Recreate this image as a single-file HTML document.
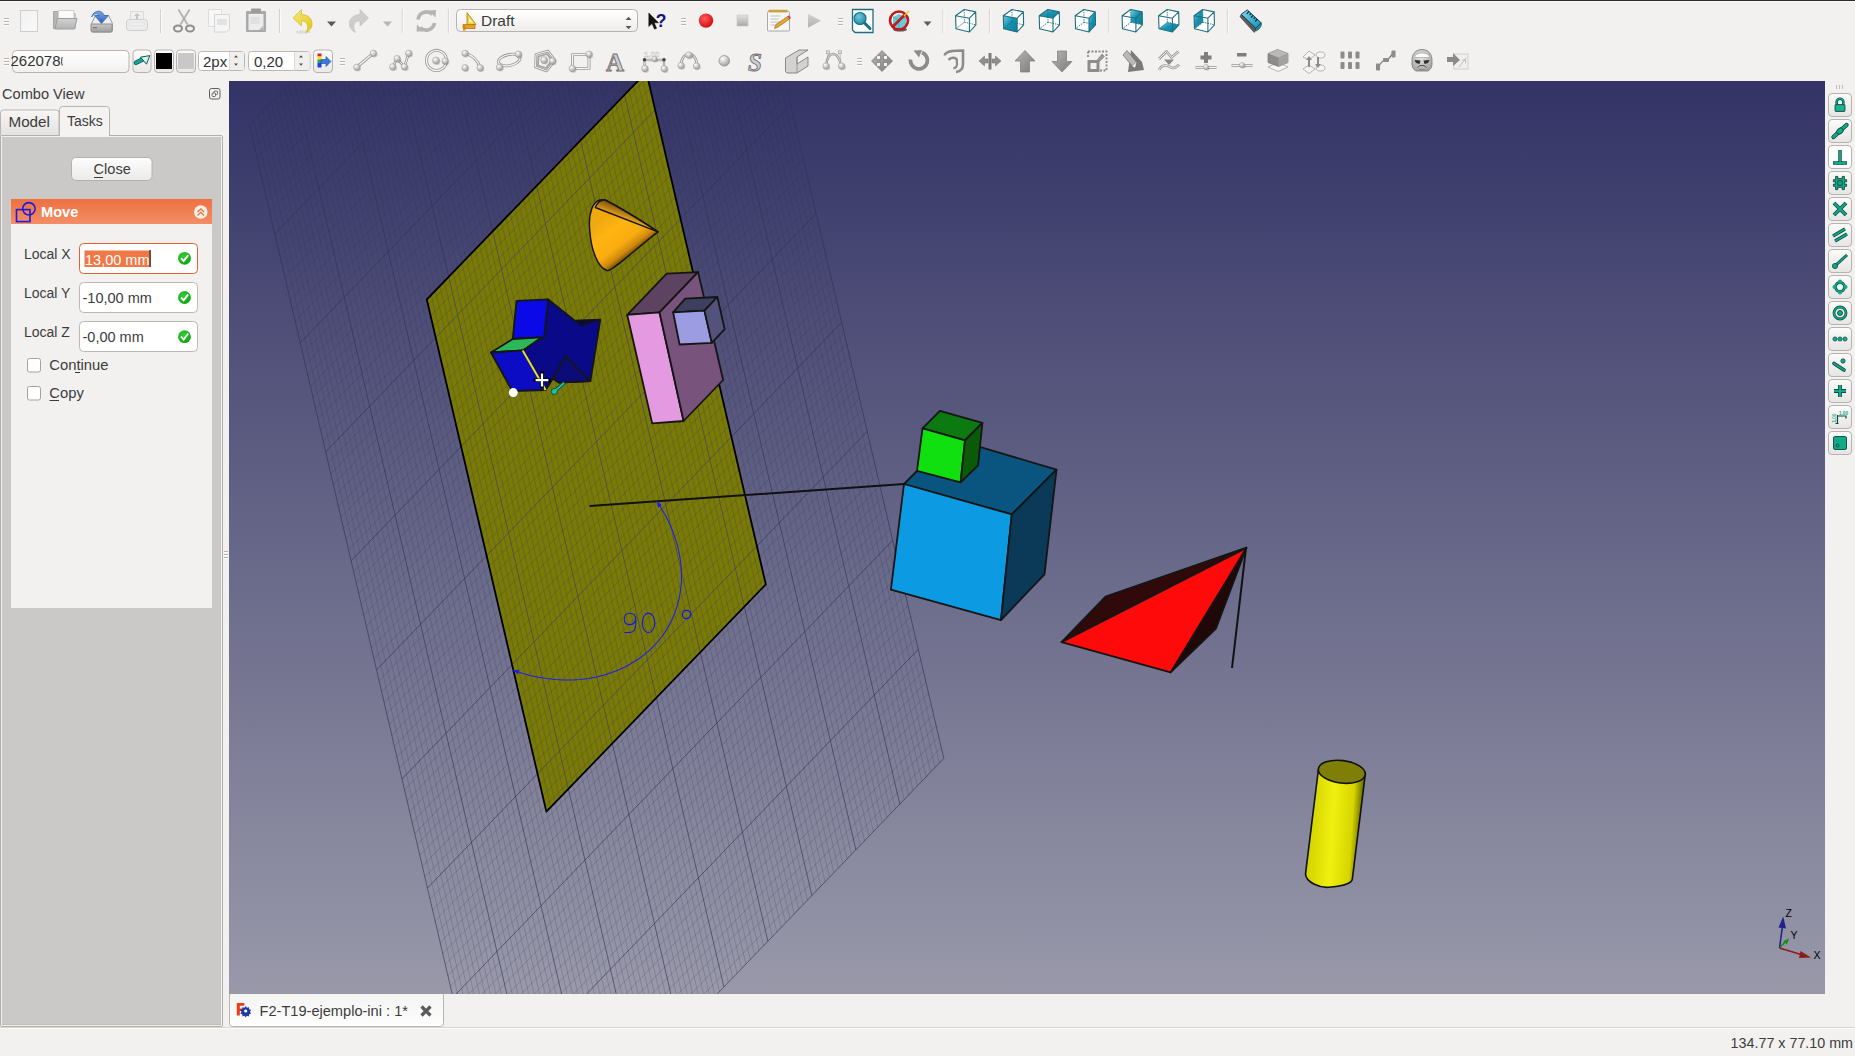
<!DOCTYPE html>
<html><head><meta charset="utf-8">
<style>
*{box-sizing:border-box}
html,body{margin:0;padding:0}
body{width:1855px;height:1056px;position:relative;overflow:hidden;background:#f2f1f0;font-family:"Liberation Sans",sans-serif;font-size:14px;color:#3c3c3c}
.a{position:absolute}
.topline{left:0;top:0;width:1855px;height:1px;background:#2c2b27}
.topline2{left:0;top:1px;width:1855px;height:1px;background:#fbfbfa}
.grip{position:absolute;width:5px;height:8px;background:repeating-linear-gradient(#b3b0ab 0 1px,#fdfdfd 1px 2px,transparent 2px 3px)}
.sep{position:absolute;width:1px;height:24px;background:#d3d0cc;border-right:1px solid #fff;width:2px}
.ico{position:absolute}
.txt{position:absolute;white-space:nowrap}
</style></head><body>
<div class="a topline"></div><div class="a topline2"></div>
<svg class="a" style="left:0;top:0" width="1855" height="80" viewBox="0 0 1855 80" font-family="Liberation Sans"><defs>
<linearGradient id="pageg" x1="0" y1="0" x2="1" y2="1"><stop offset="0" stop-color="#f0f0f0"/><stop offset="1" stop-color="#fafafa"/></linearGradient>
<linearGradient id="foldg" x1="0" y1="0" x2="0" y2="1"><stop offset="0" stop-color="#d2d2d2"/><stop offset="1" stop-color="#b4b4b4"/></linearGradient>
<linearGradient id="driveg" x1="0" y1="0" x2="0" y2="1"><stop offset="0" stop-color="#c8c8c8"/><stop offset="1" stop-color="#9c9c9c"/></linearGradient>
<linearGradient id="blueg" x1="0" y1="0" x2="0" y2="1"><stop offset="0" stop-color="#7aa8e0"/><stop offset="1" stop-color="#2a62b8"/></linearGradient>
<linearGradient id="undog" x1="0" y1="0" x2="1" y2="1"><stop offset="0" stop-color="#f4e880"/><stop offset="1" stop-color="#e0c810"/></linearGradient>
<linearGradient id="combog" x1="0" y1="0" x2="0" y2="1"><stop offset="0" stop-color="#ffffff"/><stop offset="1" stop-color="#eeedeb"/></linearGradient>
<linearGradient id="btng" x1="0" y1="0" x2="0" y2="1"><stop offset="0" stop-color="#fbfbfa"/><stop offset="1" stop-color="#eae9e7"/></linearGradient>
<linearGradient id="inputg" x1="0" y1="0" x2="0" y2="1"><stop offset="0" stop-color="#ffffff"/><stop offset="1" stop-color="#f0f0f0"/></linearGradient>
<radialGradient id="recg" cx="0.4" cy="0.35" r="0.7"><stop offset="0" stop-color="#ff5a5a"/><stop offset="1" stop-color="#d00808"/></radialGradient>
<linearGradient id="stopg" x1="0" y1="0" x2="0" y2="1"><stop offset="0" stop-color="#e2e2e2"/><stop offset="1" stop-color="#a8a8a8"/></linearGradient>
<linearGradient id="playg" x1="0" y1="0" x2="0" y2="1"><stop offset="0" stop-color="#d4d4d4"/><stop offset="1" stop-color="#b0b0b0"/></linearGradient>
<radialGradient id="magg" cx="0.4" cy="0.35" r="0.7"><stop offset="0" stop-color="#70c8e0"/><stop offset="1" stop-color="#1a8aa8"/></radialGradient>
<linearGradient id="cubeg" x1="0" y1="0" x2="1" y2="1"><stop offset="0" stop-color="#7ccbe8"/><stop offset="0.45" stop-color="#1894b0"/><stop offset="1" stop-color="#0a7c98"/></linearGradient>
<radialGradient id="ballg" cx="0.35" cy="0.3" r="0.75"><stop offset="0" stop-color="#ffffff"/><stop offset="0.6" stop-color="#c4c4c4"/><stop offset="1" stop-color="#9a9a9a"/></radialGradient>
<radialGradient id="clg" cx="0.45" cy="0.35" r="0.7"><stop offset="0" stop-color="#e8e8e8"/><stop offset="1" stop-color="#a0a0a0"/></radialGradient>
<linearGradient id="greyg" x1="0" y1="0" x2="1" y2="1"><stop offset="0" stop-color="#b4b4b4"/><stop offset="1" stop-color="#7c7c7c"/></linearGradient>
</defs><rect x="4" y="18" width="5" height="1" fill="#b8b5b0"/><rect x="4" y="19" width="5" height="1" fill="#fff"/><rect x="4" y="21" width="5" height="1" fill="#b8b5b0"/><rect x="4" y="22" width="5" height="1" fill="#fff"/><rect x="4" y="24" width="5" height="1" fill="#b8b5b0"/><rect x="4" y="25" width="5" height="1" fill="#fff"/><rect x="20.5" y="10.5" width="17" height="21" fill="url(#pageg)" stroke="#cecece"/><path d="M53.5 11.5h7l1.5 2h13v15h-21.5z" fill="#b6b6b6" stroke="#a6a6a6"/><rect x="58.5" y="10.5" width="15.5" height="11" fill="#fbfbfb" stroke="#cfcfcf"/><path d="M57.5 18.5h19.5l-2.5 10.5h-19.5z" fill="url(#foldg)" stroke="#9e9e9e"/><path d="M95.5 15.5h13l4 8v7a1.5 1.5 0 0 1-1.5 1.5h-18a1.5 1.5 0 0 1-1.5-1.5v-7z" fill="#eeeeee" stroke="#9c9c9c"/><path d="M91 24h21v6.5a1.5 1.5 0 0 1-1.5 1.5h-18a1.5 1.5 0 0 1-1.5-1.5z" fill="url(#driveg)" stroke="#8e8e8e"/><rect x="93" y="27" width="4" height="1.2" fill="#777"/><path d="M91.5 17 C93.5 10.5 101 8.5 104.5 15.5 L108.5 15.5 L101.5 23.5 L94.5 15.5 L99 15.5 C97 12.5 94 13.5 91.5 17Z" fill="url(#blueg)" stroke="#2a5aa8" stroke-width="0.6"/><rect x="130.5" y="11.5" width="13" height="9" fill="#efefef" stroke="#dadada"/><path d="M137 13l-3 3h2v3h2v-3h2z" fill="#c4c4c4"/><rect x="126.5" y="19.5" width="21" height="11" rx="3" fill="#ececec" stroke="#cdcdcd"/><rect x="129" y="23" width="16" height="2" rx="1" fill="#f8f8f8" stroke="#d6d6d6" stroke-width="0.6"/><rect x="160.0" y="9" width="1" height="24" fill="#d5d2ce"/><rect x="161.0" y="9" width="1" height="24" fill="#fbfbfa"/><path d="M178.5 9.5 L187.5 24.5 M189.5 9.5 L180.5 24.5" stroke="#c2c2c2" stroke-width="2.2"/><path d="M178.5 9.5 L187.5 24.5 M189.5 9.5 L180.5 24.5" stroke="#9a9a9a" stroke-width="0.6"/><ellipse cx="178" cy="28.5" rx="4" ry="3" fill="none" stroke="#8c8c8c" stroke-width="2"/><ellipse cx="190" cy="28.5" rx="4" ry="3" fill="none" stroke="#8c8c8c" stroke-width="2"/><rect x="208.5" y="9.5" width="13" height="17" fill="#f7f7f7" stroke="#dedede"/><path d="M214.5 14.5h15v14.5l-3 3h-12z" fill="#f5f5f5" stroke="#d6d6d6"/><rect x="217" y="19" width="10" height="6" fill="#e2e2e2"/><rect x="246" y="11" width="20" height="21" rx="1" fill="#a9a9a9"/><rect x="248.5" y="14" width="15" height="16" fill="#ececec"/><rect x="251" y="8.5" width="10" height="4.5" rx="1" fill="#9c9c9c"/><rect x="250.5" y="17" width="9" height="7" fill="#e0e0e0"/><path d="M263.5 25.5v4.5h-4.5z" fill="#b8b8b8"/><rect x="279.0" y="9" width="1" height="24" fill="#d5d2ce"/><rect x="280.0" y="9" width="1" height="24" fill="#fbfbfa"/><ellipse cx="303" cy="32" rx="8" ry="1.8" fill="#000" opacity="0.08"/><path d="M293 18 L301.5 9.5 L301.5 14.5 C308.5 14.5 313 19.5 312 25.5 C311.5 28.5 309 31 306 32.5 C308 29 308.5 25 306 22.5 C304.5 21 303 21 301.5 21 L301.5 26 Z" fill="url(#undog)" stroke="#cbb214" stroke-width="0.6"/><path d="M327 21.5h9l-4.5 5z" fill="#5a5a5a"/><path d="M368.5 18 L360 9.5 L360 14.5 C353 14.5 348.5 19.5 349.5 25.5 C350 28.5 352.5 31 355.5 32.5 C353.5 29 353 25 355.5 22.5 C357 21 358.5 21 360 21 L360 26 Z" fill="#cdcdcd" stroke="#bdbdbd" stroke-width="0.6"/><path d="M383 21.5h9l-4.5 5z" fill="#b5b5b5"/><rect x="401.8" y="9" width="1" height="24" fill="#d5d2ce"/><rect x="402.8" y="9" width="1" height="24" fill="#fbfbfa"/><path d="M418 19.5 A8.5 8.5 0 0 1 432.5 14.5" fill="none" stroke="#b4b4b4" stroke-width="3.6"/><path d="M428.5 10.5 L436 10 L435.5 17.5Z" fill="#b4b4b4"/><path d="M434.5 23 A8.5 8.5 0 0 1 420 27.5" fill="none" stroke="#b4b4b4" stroke-width="3.6"/><path d="M423.5 31.5 L416.5 31.5 L417 24.5Z" fill="#b4b4b4"/><rect x="447.9" y="9" width="1" height="24" fill="#d5d2ce"/><rect x="448.9" y="9" width="1" height="24" fill="#fbfbfa"/><rect x="456.5" y="9.5" width="181" height="22" rx="4" fill="url(#combog)" stroke="#b6b3ae"/><path d="M463 28.5v-4h12v4z" fill="#e8a020" stroke="#b06810" stroke-width="0.7"/><path d="M467 24.5v-12l9 12z" fill="#f0d040" stroke="#a08010" stroke-width="0.8"/><path d="M469 22.5v-5l4 5z" fill="#fff6b0"/><rect x="463" y="25" width="2.5" height="5.5" fill="#d88a10"/><text x="481" y="26" font-size="15.5" fill="#3c3c3c">Draft</text><path d="M625.5 20h6l-3-3.2z M625.5 26h6l-3 3.2z" fill="#5a5a5a"/><path d="M648.8 13 L648.8 26.5 L652 23.6 L654.5 29.2 L656.6 28.3 L654.2 22.8 L658.5 22.8 Z" fill="#111" stroke="#111" stroke-width="0.5"/><text x="655.8" y="26.5" font-size="17.5" font-weight="bold" fill="#141478">?</text><rect x="681" y="18" width="5" height="1" fill="#b8b5b0"/><rect x="681" y="19" width="5" height="1" fill="#fff"/><rect x="681" y="21" width="5" height="1" fill="#b8b5b0"/><rect x="681" y="22" width="5" height="1" fill="#fff"/><rect x="681" y="24" width="5" height="1" fill="#b8b5b0"/><rect x="681" y="25" width="5" height="1" fill="#fff"/><circle cx="706" cy="20.6" r="7.2" fill="url(#recg)"/><rect x="737" y="15" width="11" height="11" fill="url(#stopg)" stroke="#c6c6c6" stroke-width="0.6"/><rect x="767.5" y="11.5" width="22" height="19.5" rx="1" fill="#f6f6f4" stroke="#a8a8a8"/><rect x="768.5" y="9.8" width="19" height="2.6" fill="#c8a23c"/><path d="M770.5 16h10M770.5 19h8M770.5 22h12M770.5 25h9" stroke="#b4b4b4" stroke-width="0.8"/><path d="M774.5 28.5 L776 24.5 L787.5 16.5 L789.5 19 L778 27 Z" fill="#e8a82c" stroke="#8a5a10" stroke-width="0.6"/><path d="M787.5 16.5 L789.5 19 L791 18 L789 15.3Z" fill="#d04040"/><path d="M808 13.7 L821 20.7 L808 27.8 Z" fill="url(#playg)"/><rect x="838" y="18" width="5" height="1" fill="#b8b5b0"/><rect x="838" y="19" width="5" height="1" fill="#fff"/><rect x="838" y="21" width="5" height="1" fill="#b8b5b0"/><rect x="838" y="22" width="5" height="1" fill="#fff"/><rect x="838" y="24" width="5" height="1" fill="#b8b5b0"/><rect x="838" y="25" width="5" height="1" fill="#fff"/><path d="M852.5 9.5h20.5v23h-18l-2.5-2.5z" fill="#fff" stroke="#1e6e80" stroke-width="1.3"/><circle cx="860" cy="18.5" r="6" fill="url(#magg)" stroke="#1e6e80" stroke-width="1.2"/><path d="M864.5 23 L870 28.5" stroke="#1e6e80" stroke-width="3" stroke-linecap="round"/><ellipse cx="900" cy="29.5" rx="7" ry="2" fill="#333" opacity="0.8"/><path d="M893 17 l6-3 7 3 v9 l-7 3 -6-3z" fill="#6ccad8"/><path d="M893 17 l6 3 7-3 M899 20v9" stroke="#3aa0b8" stroke-width="0.7" fill="none"/><circle cx="899" cy="20.5" r="9" fill="none" stroke="#c01a1a" stroke-width="2.6"/><path d="M892.5 27 L905.5 14" stroke="#c01a1a" stroke-width="2.6"/><path d="M904 16 L909 11" stroke="#e8c820" stroke-width="1.5"/><path d="M923.5 21.5h8l-4 4.5z" fill="#5a5a5a"/><rect x="942.4" y="9" width="1" height="24" fill="#d5d2ce"/><rect x="943.4" y="9" width="1" height="24" fill="#fbfbfa"/><g><path d="M955.6 15.8 L964.2 9.5 L975.7 11.9 L975.9 24.8 L969.4 32.0 L956.0 28.7Z" fill="#fff"/><path d="M964.2 9.5L964.4 22.2M964.4 22.2L956.0 28.7M964.4 22.2L975.9 24.8" stroke="#1e6e7e" stroke-width="0.9" stroke-dasharray="1.4 1" fill="none"/><path d="M955.6 15.8 L964.2 9.5 L975.7 11.9 L975.9 24.8 L969.4 32.0 L956.0 28.7Z M955.6 15.8 L969.4 18.2 L975.7 11.9 M969.4 18.2 L969.4 32.0" stroke="#1e6e7e" stroke-width="1.1" fill="none" stroke-linejoin="round"/></g><rect x="989.1" y="9" width="1" height="24" fill="#d5d2ce"/><rect x="990.1" y="9" width="1" height="24" fill="#fbfbfa"/><g><path d="M1003.3 15.8 L1011.9 9.5 L1023.4 11.9 L1023.6 24.8 L1017.1 32.0 L1003.7 28.7Z" fill="#fff"/><path d="M1003.3 15.8 L1017.1 18.2 L1017.1 32.0 L1003.7 28.7Z" fill="url(#cubeg)"/><path d="M1011.9 9.5L1012.1 22.2M1012.1 22.2L1003.7 28.7M1012.1 22.2L1023.6 24.8" stroke="#1e6e7e" stroke-width="0.9" stroke-dasharray="1.4 1" fill="none"/><path d="M1003.3 15.8 L1011.9 9.5 L1023.4 11.9 L1023.6 24.8 L1017.1 32.0 L1003.7 28.7Z M1003.3 15.8 L1017.1 18.2 L1023.4 11.9 M1017.1 18.2 L1017.1 32.0" stroke="#1e6e7e" stroke-width="1.1" fill="none" stroke-linejoin="round"/></g><g><path d="M1039.2 15.8 L1047.8 9.5 L1059.3 11.9 L1059.5 24.8 L1053.0 32.0 L1039.6 28.7Z" fill="#fff"/><path d="M1039.2 15.8 L1047.8 9.5 L1059.3 11.9 L1053.0 18.2Z" fill="url(#cubeg)"/><path d="M1047.8 9.5L1048.0 22.2M1048.0 22.2L1039.6 28.7M1048.0 22.2L1059.5 24.8" stroke="#1e6e7e" stroke-width="0.9" stroke-dasharray="1.4 1" fill="none"/><path d="M1039.2 15.8 L1047.8 9.5 L1059.3 11.9 L1059.5 24.8 L1053.0 32.0 L1039.6 28.7Z M1039.2 15.8 L1053.0 18.2 L1059.3 11.9 M1053.0 18.2 L1053.0 32.0" stroke="#1e6e7e" stroke-width="1.1" fill="none" stroke-linejoin="round"/></g><g><path d="M1075.2 15.8 L1083.8 9.5 L1095.3 11.9 L1095.5 24.8 L1089.0 32.0 L1075.6 28.7Z" fill="#fff"/><path d="M1089.0 18.2 L1095.3 11.9 L1095.5 24.8 L1089.0 32.0Z" fill="url(#cubeg)"/><path d="M1083.8 9.5L1084.0 22.2M1084.0 22.2L1075.6 28.7M1084.0 22.2L1095.5 24.8" stroke="#1e6e7e" stroke-width="0.9" stroke-dasharray="1.4 1" fill="none"/><path d="M1075.2 15.8 L1083.8 9.5 L1095.3 11.9 L1095.5 24.8 L1089.0 32.0 L1075.6 28.7Z M1075.2 15.8 L1089.0 18.2 L1095.3 11.9 M1089.0 18.2 L1089.0 32.0" stroke="#1e6e7e" stroke-width="1.1" fill="none" stroke-linejoin="round"/></g><rect x="1108.4" y="9" width="1" height="24" fill="#d5d2ce"/><rect x="1109.4" y="9" width="1" height="24" fill="#fbfbfa"/><g><path d="M1122.1 15.8 L1130.7 9.5 L1142.2 11.9 L1142.4 24.8 L1135.9 32.0 L1122.5 28.7Z" fill="#fff"/><path d="M1130.7 9.5 L1142.2 11.9 L1142.4 24.8 L1130.9 22.2Z" fill="url(#cubeg)"/><path d="M1130.7 9.5L1130.9 22.2M1130.9 22.2L1122.5 28.7M1130.9 22.2L1142.4 24.8" stroke="#1e6e7e" stroke-width="0.9" stroke-dasharray="1.4 1" fill="none"/><path d="M1122.1 15.8 L1130.7 9.5 L1142.2 11.9 L1142.4 24.8 L1135.9 32.0 L1122.5 28.7Z M1122.1 15.8 L1135.9 18.2 L1142.2 11.9 M1135.9 18.2 L1135.9 32.0" stroke="#1e6e7e" stroke-width="1.1" fill="none" stroke-linejoin="round"/></g><g><path d="M1158.6 15.8 L1167.2 9.5 L1178.7 11.9 L1178.9 24.8 L1172.4 32.0 L1159.0 28.7Z" fill="#fff"/><path d="M1159.0 28.7 L1172.4 32.0 L1178.9 24.8 L1167.4 22.2Z" fill="url(#cubeg)"/><path d="M1167.2 9.5L1167.4 22.2M1167.4 22.2L1159.0 28.7M1167.4 22.2L1178.9 24.8" stroke="#1e6e7e" stroke-width="0.9" stroke-dasharray="1.4 1" fill="none"/><path d="M1158.6 15.8 L1167.2 9.5 L1178.7 11.9 L1178.9 24.8 L1172.4 32.0 L1159.0 28.7Z M1158.6 15.8 L1172.4 18.2 L1178.7 11.9 M1172.4 18.2 L1172.4 32.0" stroke="#1e6e7e" stroke-width="1.1" fill="none" stroke-linejoin="round"/></g><g><path d="M1194.1 15.8 L1202.7 9.5 L1214.2 11.9 L1214.4 24.8 L1207.9 32.0 L1194.5 28.7Z" fill="#fff"/><path d="M1194.1 15.8 L1202.7 9.5 L1202.9 22.2 L1194.5 28.7Z" fill="url(#cubeg)"/><path d="M1202.7 9.5L1202.9 22.2M1202.9 22.2L1194.5 28.7M1202.9 22.2L1214.4 24.8" stroke="#1e6e7e" stroke-width="0.9" stroke-dasharray="1.4 1" fill="none"/><path d="M1194.1 15.8 L1202.7 9.5 L1214.2 11.9 L1214.4 24.8 L1207.9 32.0 L1194.5 28.7Z M1194.1 15.8 L1207.9 18.2 L1214.2 11.9 M1207.9 18.2 L1207.9 32.0" stroke="#1e6e7e" stroke-width="1.1" fill="none" stroke-linejoin="round"/></g><rect x="1226.9" y="9" width="1" height="24" fill="#d5d2ce"/><rect x="1227.9" y="9" width="1" height="24" fill="#fbfbfa"/><defs><linearGradient id="rulg" x1="0" y1="0" x2="1" y2="1"><stop offset="0" stop-color="#86d6f4"/><stop offset="1" stop-color="#1290b0"/></linearGradient></defs><path d="M1241.2 14.3 L1240 16.8 L1254.2 32.5 L1255.8 28.2 Z" fill="#5a5a5a" stroke="#333" stroke-width="0.5"/><path d="M1241.2 14.3 L1247.3 9.9 L1261.2 22.8 L1255.8 28.2 Z" fill="url(#rulg)" stroke="#0a3440" stroke-width="0.9"/><path d="M1255.8 28.2 L1261.2 22.8 C1262.2 25.5 1259.5 30 1255.3 31.2 Z" fill="#1a8ea8" stroke="#0a3440" stroke-width="0.6"/><path d="M1249.0 11.4L1246.8 13.8M1251.1 13.4L1249.6 15.0M1253.1 15.3L1251.0 17.7M1255.2 17.3L1253.7 18.9M1257.3 19.2L1255.1 21.5" stroke="#06202a" stroke-width="1.1"/><rect x="4" y="58" width="5" height="1" fill="#b8b5b0"/><rect x="4" y="59" width="5" height="1" fill="#fff"/><rect x="4" y="61" width="5" height="1" fill="#b8b5b0"/><rect x="4" y="62" width="5" height="1" fill="#fff"/><rect x="4" y="64" width="5" height="1" fill="#b8b5b0"/><rect x="4" y="65" width="5" height="1" fill="#fff"/><rect x="12.5" y="50.5" width="116.5" height="22" rx="4" fill="url(#inputg)" stroke="#b8b5b0"/><text x="10.5" y="66" font-size="15" fill="#333">262078</text><path d="M62.3 57 C61.4 59 61.4 63.5 62.3 65.5" stroke="#333" stroke-width="1" fill="none"/><rect x="133" y="50" width="18" height="22.5" rx="3.5" fill="url(#btng)" stroke="#b6b3ae"/><path d="M136 62.8 L143.5 59" stroke="#0c5a56" stroke-width="4.6" stroke-linecap="round"/><path d="M136 62.8 L143.5 59" stroke="#1aa49a" stroke-width="2.8" stroke-linecap="round"/><path d="M149.8 55.6 L140.5 57.2 L146.5 64.2 Z" fill="#d4f2ee" stroke="#0c5a56" stroke-width="1" stroke-linejoin="round"/><rect x="154.5" y="50" width="19" height="22.5" rx="3.5" fill="url(#btng)" stroke="#b6b3ae"/><rect x="156" y="53" width="16" height="16" fill="#000"/><rect x="176.5" y="50" width="19" height="22.5" rx="3.5" fill="url(#btng)" stroke="#b6b3ae"/><rect x="178" y="53" width="16" height="16" fill="#c8c8c8"/><rect x="198.5" y="51.5" width="46" height="19" rx="3" fill="#fff" stroke="#bcb9b4"/><rect x="229.5" y="52" width="14.5" height="18" fill="#f0efed"/><path d="M229.5 52v18.5" stroke="#dcdad6"/><path d="M234 57.5h4l-2-2.2z M234 63.5h4l-2 2.2z" fill="#4a4a4a"/><text x="203" y="66.5" font-size="15" fill="#333">2px</text><rect x="248.5" y="51.5" width="61.5" height="19" rx="3" fill="#fff" stroke="#bcb9b4"/><rect x="294.5" y="52" width="15" height="18" fill="#f0efed"/><path d="M294.5 52v18.5" stroke="#dcdad6"/><path d="M299 57.5h4l-2-2.2z M299 63.5h4l-2 2.2z" fill="#4a4a4a"/><text x="254" y="66.5" font-size="15" fill="#333">0,20</text><rect x="313.5" y="50" width="19" height="22.5" rx="3.5" fill="url(#btng)" stroke="#b6b3ae"/><rect x="317.5" y="53.5" width="4" height="3" fill="#e02020"/><rect x="317.5" y="56.5" width="4" height="3" fill="#f0e020"/><rect x="317.5" y="59.5" width="4" height="3" fill="#20b020"/><rect x="317.5" y="62.5" width="4" height="5" fill="#2040e0"/><path d="M321 59.5h5v-3l5 5-5 5v-3h-5z" fill="#3a7ae0" stroke="#1a4aa0" stroke-width="0.6"/><rect x="340" y="58" width="5" height="1" fill="#b8b5b0"/><rect x="340" y="59" width="5" height="1" fill="#fff"/><rect x="340" y="61" width="5" height="1" fill="#b8b5b0"/><rect x="340" y="62" width="5" height="1" fill="#fff"/><rect x="340" y="64" width="5" height="1" fill="#b8b5b0"/><rect x="340" y="65" width="5" height="1" fill="#fff"/><path d="M357 67 L373.3 53.3" fill="none" stroke="#8e8e8e" stroke-width="3.0" stroke-linejoin="round" opacity="0.9"/><path d="M357 67 L373.3 53.3" fill="none" stroke="#f4f4f4" stroke-width="1.4" stroke-linejoin="round"/><circle cx="357.8" cy="68.3" r="3.2" fill="#000" opacity="0.18"/><circle cx="356.8" cy="67.3" r="3.2" fill="url(#ballg)" stroke="#9a9a9a" stroke-width="0.5"/><circle cx="374.3" cy="54.3" r="3.2" fill="#000" opacity="0.18"/><circle cx="373.3" cy="53.3" r="3.2" fill="url(#ballg)" stroke="#9a9a9a" stroke-width="0.5"/><path d="M392.7 66.8 L397.1 58.6 L404.4 66.8 L408.7 53.3" fill="none" stroke="#8e8e8e" stroke-width="2.6" stroke-linejoin="round" opacity="0.9"/><path d="M392.7 66.8 L397.1 58.6 L404.4 66.8 L408.7 53.3" fill="none" stroke="#f4f4f4" stroke-width="1.0" stroke-linejoin="round"/><circle cx="393.7" cy="67.8" r="3.2" fill="#000" opacity="0.18"/><circle cx="392.7" cy="66.8" r="3.2" fill="url(#ballg)" stroke="#9a9a9a" stroke-width="0.5"/><circle cx="398.1" cy="59.6" r="3.2" fill="#000" opacity="0.18"/><circle cx="397.1" cy="58.6" r="3.2" fill="url(#ballg)" stroke="#9a9a9a" stroke-width="0.5"/><circle cx="405.4" cy="67.8" r="3.2" fill="#000" opacity="0.18"/><circle cx="404.4" cy="66.8" r="3.2" fill="url(#ballg)" stroke="#9a9a9a" stroke-width="0.5"/><circle cx="409.7" cy="54.3" r="3.2" fill="#000" opacity="0.18"/><circle cx="408.7" cy="53.3" r="3.2" fill="url(#ballg)" stroke="#9a9a9a" stroke-width="0.5"/><path d="M446.5 60.5 A10 10 0 1 1 446.5 60.4" fill="none" stroke="#8e8e8e" stroke-width="3.0" stroke-linejoin="round" opacity="0.9"/><path d="M446.5 60.5 A10 10 0 1 1 446.5 60.4" fill="none" stroke="#f4f4f4" stroke-width="1.4" stroke-linejoin="round"/><circle cx="436.9" cy="61.5" r="3.4" fill="#000" opacity="0.18"/><circle cx="435.9" cy="60.5" r="3.4" fill="url(#ballg)" stroke="#9a9a9a" stroke-width="0.5"/><circle cx="446.1" cy="62.0" r="3.2" fill="#000" opacity="0.18"/><circle cx="445.1" cy="61.0" r="3.2" fill="url(#ballg)" stroke="#9a9a9a" stroke-width="0.5"/><path d="M465 53.3 C472 55 478 60 480.1 67.8" fill="none" stroke="#8e8e8e" stroke-width="2.8" stroke-linejoin="round" opacity="0.9"/><path d="M465 53.3 C472 55 478 60 480.1 67.8" fill="none" stroke="#f4f4f4" stroke-width="1.2" stroke-linejoin="round"/><circle cx="466.0" cy="54.3" r="3.2" fill="#000" opacity="0.18"/><circle cx="465.0" cy="53.3" r="3.2" fill="url(#ballg)" stroke="#9a9a9a" stroke-width="0.5"/><circle cx="481.1" cy="68.8" r="3.2" fill="#000" opacity="0.18"/><circle cx="480.1" cy="67.8" r="3.2" fill="url(#ballg)" stroke="#9a9a9a" stroke-width="0.5"/><circle cx="466.0" cy="68.8" r="3.2" fill="#000" opacity="0.18"/><circle cx="465.0" cy="67.8" r="3.2" fill="url(#ballg)" stroke="#9a9a9a" stroke-width="0.5"/><path d="M498.5 62.5 A11 5.5 -12 1 1 520 58.8 A11 5.5 -12 0 1 498.5 62.5" fill="none" stroke="#8e8e8e" stroke-width="2.8" stroke-linejoin="round" opacity="0.9"/><path d="M498.5 62.5 A11 5.5 -12 1 1 520 58.8 A11 5.5 -12 0 1 498.5 62.5" fill="none" stroke="#f4f4f4" stroke-width="1.2" stroke-linejoin="round"/><circle cx="519.4" cy="55.2" r="3.2" fill="#000" opacity="0.18"/><circle cx="518.4" cy="54.2" r="3.2" fill="url(#ballg)" stroke="#9a9a9a" stroke-width="0.5"/><circle cx="500.5" cy="68.3" r="3.2" fill="#000" opacity="0.18"/><circle cx="499.5" cy="67.3" r="3.2" fill="url(#ballg)" stroke="#9a9a9a" stroke-width="0.5"/><path d="M536 54.5 L548 51 L555 60.5 L546.5 71 L535.5 67 Z" fill="none" stroke="#8e8e8e" stroke-width="2.6" stroke-linejoin="round" opacity="0.9"/><path d="M536 54.5 L548 51 L555 60.5 L546.5 71 L535.5 67 Z" fill="none" stroke="#f4f4f4" stroke-width="1.0" stroke-linejoin="round"/><path d="M538.5 56.5 L547 54 L552 60.5 L546 68 L538 65.5 Z" fill="none" stroke="#8e8e8e" stroke-width="1.8" stroke-linejoin="round" opacity="0.9"/><path d="M538.5 56.5 L547 54 L552 60.5 L546 68 L538 65.5 Z" fill="none" stroke="#f4f4f4" stroke-width="0.2" stroke-linejoin="round"/><circle cx="545.0" cy="61.0" r="3.4" fill="#000" opacity="0.18"/><circle cx="544.0" cy="60.0" r="3.4" fill="url(#ballg)" stroke="#9a9a9a" stroke-width="0.5"/><circle cx="553.5" cy="62.0" r="3.2" fill="#000" opacity="0.18"/><circle cx="552.5" cy="61.0" r="3.2" fill="url(#ballg)" stroke="#9a9a9a" stroke-width="0.5"/><path d="M572.5 54.5 H589 V68.5 H572.5 Z" fill="none" stroke="#8e8e8e" stroke-width="3.0" stroke-linejoin="round" opacity="0.9"/><path d="M572.5 54.5 H589 V68.5 H572.5 Z" fill="none" stroke="#f4f4f4" stroke-width="1.4" stroke-linejoin="round"/><circle cx="590.0" cy="55.2" r="3.2" fill="#000" opacity="0.18"/><circle cx="589.0" cy="54.2" r="3.2" fill="url(#ballg)" stroke="#9a9a9a" stroke-width="0.5"/><circle cx="573.3" cy="69.5" r="3.2" fill="#000" opacity="0.18"/><circle cx="572.3" cy="68.5" r="3.2" fill="url(#ballg)" stroke="#9a9a9a" stroke-width="0.5"/><text x="606" y="71" font-family="Liberation Serif" font-size="25" font-weight="bold" fill="#cfcfcf" stroke="#6e6e6e" stroke-width="0.9">A</text><text x="644" y="57" font-size="8" font-weight="bold" fill="#fff" stroke="#bbb" stroke-width="0.4">1.00</text><path d="M644.5 60 H664" fill="none" stroke="#8e8e8e" stroke-width="2.4" stroke-linejoin="round" opacity="0.9"/><path d="M644.5 60 H664" fill="none" stroke="#f4f4f4" stroke-width="0.8" stroke-linejoin="round"/><path d="M644.5 60 V68" fill="none" stroke="#8e8e8e" stroke-width="2.2" stroke-linejoin="round" opacity="0.9"/><path d="M644.5 60 V68" fill="none" stroke="#f4f4f4" stroke-width="0.6" stroke-linejoin="round"/><path d="M664 60 V68" fill="none" stroke="#8e8e8e" stroke-width="2.2" stroke-linejoin="round" opacity="0.9"/><path d="M664 60 V68" fill="none" stroke="#f4f4f4" stroke-width="0.6" stroke-linejoin="round"/><circle cx="644.5" cy="59.8" r="1.8" fill="#444"/><circle cx="664" cy="59.8" r="1.8" fill="#444"/><circle cx="655.4" cy="60.0" r="2.6" fill="#000" opacity="0.18"/><circle cx="654.4" cy="59.0" r="2.6" fill="url(#ballg)" stroke="#9a9a9a" stroke-width="0.5"/><circle cx="645.8" cy="69.5" r="3.2" fill="#000" opacity="0.18"/><circle cx="644.8" cy="68.5" r="3.2" fill="url(#ballg)" stroke="#9a9a9a" stroke-width="0.5"/><circle cx="665.2" cy="69.8" r="3.2" fill="#000" opacity="0.18"/><circle cx="664.2" cy="68.8" r="3.2" fill="url(#ballg)" stroke="#9a9a9a" stroke-width="0.5"/><path d="M681 66 C681 50 697 50 697 66" fill="none" stroke="#8e8e8e" stroke-width="2.6" stroke-linejoin="round" opacity="0.9"/><path d="M681 66 C681 50 697 50 697 66" fill="none" stroke="#f4f4f4" stroke-width="1.0" stroke-linejoin="round"/><circle cx="689.9" cy="56.0" r="3.2" fill="#000" opacity="0.18"/><circle cx="688.9" cy="55.0" r="3.2" fill="url(#ballg)" stroke="#9a9a9a" stroke-width="0.5"/><circle cx="682.0" cy="66.5" r="3.2" fill="#000" opacity="0.18"/><circle cx="681.0" cy="65.5" r="3.2" fill="url(#ballg)" stroke="#9a9a9a" stroke-width="0.5"/><circle cx="697.5" cy="67.0" r="3.2" fill="#000" opacity="0.18"/><circle cx="696.5" cy="66.0" r="3.2" fill="url(#ballg)" stroke="#9a9a9a" stroke-width="0.5"/><circle cx="724.3" cy="60.8" r="5.3" fill="url(#ballg)" stroke="#8a8a8a" stroke-width="0.7"/><text x="748" y="70.5" font-family="Liberation Serif" font-size="25" font-style="italic" font-weight="bold" fill="#d0d0d0" stroke="#727272" stroke-width="0.9">S</text><path d="M785.5 58 L799 50 L808 50 L797 57 V64 L808 57 V66 L797 73 H787 L785.5 71.5 Z" fill="#d2d2d2" stroke="#7e7e7e" stroke-width="0.9"/><path d="M797 57 V73" stroke="#8a8a8a" stroke-width="0.8"/><path d="M826 66 C827 50 839 50 841 66" fill="none" stroke="#8e8e8e" stroke-width="2.4" stroke-linejoin="round" opacity="0.9"/><path d="M826 66 C827 50 839 50 841 66" fill="none" stroke="#f4f4f4" stroke-width="0.8" stroke-linejoin="round"/><rect x="826.5" y="50.8" width="3" height="3" fill="#ddd" stroke="#999" stroke-width="0.6"/><rect x="838.5" y="50.8" width="3" height="3" fill="#ddd" stroke="#999" stroke-width="0.6"/><path d="M828 54 L826 66 M840 54 L841 66" stroke="#999" stroke-width="0.6"/><circle cx="827.0" cy="67.0" r="3.2" fill="#000" opacity="0.18"/><circle cx="826.0" cy="66.0" r="3.2" fill="url(#ballg)" stroke="#9a9a9a" stroke-width="0.5"/><circle cx="842.5" cy="67.0" r="3.2" fill="#000" opacity="0.18"/><circle cx="841.5" cy="66.0" r="3.2" fill="url(#ballg)" stroke="#9a9a9a" stroke-width="0.5"/><rect x="857" y="58" width="5" height="1" fill="#b8b5b0"/><rect x="857" y="59" width="5" height="1" fill="#fff"/><rect x="857" y="61" width="5" height="1" fill="#b8b5b0"/><rect x="857" y="62" width="5" height="1" fill="#fff"/><rect x="857" y="64" width="5" height="1" fill="#b8b5b0"/><rect x="857" y="65" width="5" height="1" fill="#fff"/><path d="M882 50.5 L887 55.5 H883.5 V59.5 H887.5 V56 L892.5 61 L887.5 66 V62.5 H883.5 V66.5 H887 L882 71.5 L877 66.5 H880.5 V62.5 H876.5 V66 L871.5 61 L876.5 56 V59.5 H880.5 V55.5 H877 Z" fill="url(#greyg)" stroke="#6e6e6e" stroke-width="0.6"/><path d="M910.5 59.5 A8.5 8.5 0 1 0 922 52.5" fill="none" stroke="#8c8c8c" stroke-width="3.8"/><path d="M913.5 50.5 L922 50 L919 57.5 Z" fill="#8c8c8c"/><path d="M944.5 55.5 C946 50.5 956 50.5 963 50.5 V64 C963 69 960 71.5 956 72" fill="none" stroke="#8c8c8c" stroke-width="2.6"/><path d="M948.5 60 C951 56.5 956 57.5 957 60 V65 C957 67 956 68 953.5 68.5" fill="none" stroke="#8c8c8c" stroke-width="2.4"/><path d="M958.5 53.5 V64 C958.5 67 957 69.5 954 70" fill="none" stroke="#f4f4f4" stroke-width="1"/><rect x="988.5" y="53" width="3" height="16.5" fill="#7c7c7c"/><path d="M979 61 L984.5 56 V59 H988 V63 H984.5 V66 Z M1001 61 L995.5 56 V59 H992 V63 H995.5 V66 Z" fill="#8e8e8e" stroke="#6e6e6e" stroke-width="0.5"/><path d="M1025 50.5 L1035 61 H1029.5 V72 H1020.5 V61 H1015 Z" fill="url(#greyg)" stroke="#7a7a7a" stroke-width="0.7"/><path d="M1062 72 L1072 61.5 H1066.5 V51 H1057.5 V61.5 H1052 Z" fill="url(#greyg)" stroke="#7a7a7a" stroke-width="0.7"/><path d="M1088 51.5 H1106.5 V70.5 H1096" fill="none" stroke="#8a8a8a" stroke-width="1.8" stroke-dasharray="2 1.5"/><path d="M1088 51.5 V58" stroke="#8a8a8a" stroke-width="1.8" stroke-dasharray="2 1.5"/><rect x="1087.5" y="60" width="12" height="12" fill="#8c8c8c"/><rect x="1090.5" y="63" width="6" height="6" fill="#f0f0f0"/><path d="M1097.5 59.5 L1102 54 L1104.5 56.5 L1099.5 61.5 Z" fill="#9a9a9a" stroke="#777" stroke-width="0.6"/><path d="M1131 50 L1142 62 L1144 70 L1128 72 Z" fill="#7a7a7a"/><path d="M1123 55 L1127 50.5 L1136.5 62 L1132.5 66.5 Z" fill="#b8b8b8" stroke="#6e6e6e" stroke-width="0.7"/><path d="M1132.5 66.5 L1136.5 62 L1135 67.5z" fill="#fff"/><path d="M1159 59 L1166.5 51.5 L1171.5 57.5 L1178.5 51.5" fill="none" stroke="#8e8e8e" stroke-width="2.6" stroke-linejoin="round" opacity="0.9"/><path d="M1159 59 L1166.5 51.5 L1171.5 57.5 L1178.5 51.5" fill="none" stroke="#f4f4f4" stroke-width="1.0" stroke-linejoin="round"/><path d="M1159 70 C1162 64 1167 65 1170 67 C1173 69 1176 68 1179 64.5" fill="none" stroke="#8e8e8e" stroke-width="2.6" stroke-linejoin="round" opacity="0.9"/><path d="M1159 70 C1162 64 1167 65 1170 67 C1173 69 1176 68 1179 64.5" fill="none" stroke="#f4f4f4" stroke-width="1.0" stroke-linejoin="round"/><path d="M1164 59.5 H1174 L1169 65 Z" fill="#8a8a8a"/><path d="M1204 52 h4 v3.5 h3.5 v4 h-3.5 v3.5 h-4 v-3.5 h-3.5 v-4 h3.5 z" fill="#7e7e7e"/><path d="M1195.5 67.5 H1216.5" fill="none" stroke="#8e8e8e" stroke-width="2.8" stroke-linejoin="round" opacity="0.9"/><path d="M1195.5 67.5 H1216.5" fill="none" stroke="#f4f4f4" stroke-width="1.2" stroke-linejoin="round"/><circle cx="1207.0" cy="68.0" r="2.6" fill="#000" opacity="0.18"/><circle cx="1206.0" cy="67.0" r="2.6" fill="url(#ballg)" stroke="#9a9a9a" stroke-width="0.5"/><rect x="1237" y="53" width="9.5" height="3.5" fill="#7e7e7e"/><path d="M1231.5 65.5 H1252.5" fill="none" stroke="#8e8e8e" stroke-width="2.8" stroke-linejoin="round" opacity="0.9"/><path d="M1231.5 65.5 H1252.5" fill="none" stroke="#f4f4f4" stroke-width="1.2" stroke-linejoin="round"/><circle cx="1243.0" cy="66.0" r="2.6" fill="#000" opacity="0.18"/><circle cx="1242.0" cy="65.0" r="2.6" fill="url(#ballg)" stroke="#9a9a9a" stroke-width="0.5"/><path d="M1268 67 L1278 62.5 L1288 67 L1278 71.5 Z" fill="#f6f6f6" stroke="#a4a4a4" stroke-width="0.8"/><path d="M1268 53.5 L1277.5 49.5 L1288 53.5 V62.5 L1278.5 66.5 L1268 62.5 Z" fill="#8c8c8c" stroke="#6a6a6a" stroke-width="0.6"/><path d="M1268 53.5 L1277.5 49.5 L1288 53.5 L1278.5 57.5 Z" fill="#b8b8b8"/><path d="M1278.5 57.5 L1288 53.5 V62.5 L1278.5 66.5 Z" fill="#a2a2a2"/><path d="M1303 57 L1309 51 L1315 55 L1309 60 Z M1303 69 L1309 65 L1315 69 L1309 73.5 Z" fill="#f4f4f4" stroke="#9a9a9a" stroke-width="0.7"/><ellipse cx="1320.5" cy="55" rx="4.5" ry="3" fill="#f4f4f4" stroke="#9a9a9a" stroke-width="0.7"/><ellipse cx="1320.5" cy="68" rx="4.5" ry="3" fill="#f4f4f4" stroke="#9a9a9a" stroke-width="0.7"/><path d="M1309 56 l-3 4h2v7h2v-7h2z M1318 68 l-3-4h2v-7h2v7h2z" fill="#8c8c8c"/><rect x="1340.5" y="51.5" width="4" height="7" rx="1" fill="#8c8c8c"/><rect x="1340.5" y="62.0" width="4" height="7" rx="1" fill="#8c8c8c"/><rect x="1348.0" y="51.5" width="4" height="7" rx="1" fill="#8c8c8c"/><rect x="1348.0" y="62.0" width="4" height="7" rx="1" fill="#8c8c8c"/><rect x="1355.5" y="51.5" width="4" height="7" rx="1" fill="#8c8c8c"/><rect x="1355.5" y="62.0" width="4" height="7" rx="1" fill="#8c8c8c"/><path d="M1378.5 67 C1381 62 1383 60 1386 60 C1389 60 1391 55 1393 53" fill="none" stroke="#7a7a7a" stroke-width="1.2"/><rect x="1376" y="63.5" width="4" height="7" rx="0.8" fill="#8c8c8c"/><rect x="1383" y="58" width="6" height="4" rx="0.8" fill="#8c8c8c"/><rect x="1391.5" y="50.5" width="4" height="7" rx="0.8" fill="#8c8c8c"/><path d="M1412 62 C1411.5 54 1415.5 49.5 1422 49.5 C1428.5 49.5 1432.5 54 1432 62 C1432.5 66 1431 69.5 1428 71 L1416 71 C1413 69.5 1411.5 66 1412 62 Z" fill="url(#clg)" stroke="#7a7a7a" stroke-width="0.8"/><path d="M1414.5 57.5 C1414.5 51.5 1429.5 51.5 1429.5 57.5 Z" fill="#fbfbfb" stroke="#9a9a9a" stroke-width="0.6"/><path d="M1414.5 60 L1420.5 60.5 L1419.5 64 L1416 63 Z M1429.5 60 L1423.5 60.5 L1424.5 64 L1428 63 Z" fill="#303030"/><path d="M1417.5 67.5 L1420 65.5 H1424 L1426.5 67.5" fill="none" stroke="#505050" stroke-width="1"/><path d="M1419.5 69.5h5" stroke="#666" stroke-width="1" stroke-dasharray="1 1"/><rect x="1454" y="54" width="14" height="15" fill="#efefef" stroke="#c8c8c8" stroke-width="0.8"/><path d="M1447 57 H1453 V53 L1460 60 L1453 66 V62 H1447 Z" fill="#8a8a8a"/><path d="M1459 67 L1466 58 M1462 60h3.5v3.5" fill="none" stroke="#aaa" stroke-width="0.7"/></svg>
<div class="txt" style="left:3px;top:86px;left:2px;font-size:14.6px;color:#3c3c3c">Combo View</div><svg class="a" style="left:0;top:80px" width="229" height="950" viewBox="0 80 229 950" font-family="Liberation Sans"><defs><linearGradient id="tabg" x1="0" y1="0" x2="0" y2="1"><stop offset="0" stop-color="#f7f6f5"/><stop offset="1" stop-color="#e3e2e0"/></linearGradient><linearGradient id="orng" x1="0" y1="0" x2="0" y2="1"><stop offset="0" stop-color="#ee7040"/><stop offset="1" stop-color="#f38e66"/></linearGradient><linearGradient id="cbtng" x1="0" y1="0" x2="0" y2="1"><stop offset="0" stop-color="#fdfdfd"/><stop offset="1" stop-color="#ebeae8"/></linearGradient><radialGradient id="chkg" cx="0.4" cy="0.35" r="0.7"><stop offset="0" stop-color="#30d030"/><stop offset="1" stop-color="#10a010"/></radialGradient></defs><rect x="209.5" y="88.5" width="10.5" height="10.5" rx="2" fill="none" stroke="#5e5e5e" stroke-width="1"/><rect x="214" y="91" width="3.5" height="3.5" rx="0.8" fill="none" stroke="#5e5e5e" stroke-width="0.9"/><rect x="212" y="93" width="3.5" height="3.5" rx="0.8" fill="#f2f1f0" stroke="#5e5e5e" stroke-width="0.9"/><path d="M0.5 135.5 V113 a3 3 0 0 1 3-3 H56 a3 3 0 0 1 3 3 V135.5" fill="url(#tabg)" stroke="#b9b6b1"/><text x="8.5" y="126.5" font-size="15.2" fill="#3c3c3c">Model</text><rect x="0.5" y="135.5" width="222" height="891" rx="1.5" fill="#cac9c7" stroke="#b3b0ab"/><path d="M1.5 1025.5 V136.5 H221.5 V1025.5 Z" fill="none" stroke="#f0efed" stroke-width="1"/><path d="M2 1024.5 H221" stroke="#c0bdb9" stroke-width="1"/><path d="M59.5 136 V109.5 a3 3 0 0 1 3-3 H106.5 a3 3 0 0 1 3 3 V136" fill="#f4f3f2" stroke="#b9b6b1"/><rect x="60" y="134" width="49" height="3" fill="#f4f3f2"/><text x="67" y="126" font-size="14" fill="#3c3c3c">Tasks</text><rect x="71.5" y="157.5" width="80.5" height="23" rx="4" fill="url(#cbtng)" stroke="#b5b2ad"/><text x="93.5" y="174" font-size="14.6" fill="#3c3c3c">Close</text><rect x="94" y="177" width="9" height="1" fill="#3c3c3c"/><rect x="11" y="199" width="201" height="25" fill="url(#orng)"/><rect x="11" y="224" width="201" height="384" fill="#f2f1f0"/><rect x="16.5" y="209.6" width="13.5" height="12" fill="none" stroke="#1c1ce0" stroke-width="1.6"/><circle cx="28.9" cy="208.8" r="6.2" fill="none" stroke="#1c1ce0" stroke-width="1.6"/><text x="41" y="217" font-size="14.6" font-weight="bold" fill="#fff">Move</text><circle cx="200.8" cy="212" r="6.8" fill="#f6eee9"/><path d="M197.5 212 l3.3-3.2 3.3 3.2 M197.5 215.5 l3.3-3.2 3.3 3.2" fill="none" stroke="#e8703c" stroke-width="1.3"/><text x="24" y="259" font-size="14" fill="#3c3c3c">Local X</text><text x="24" y="298" font-size="14" fill="#3c3c3c">Local Y</text><text x="24" y="337" font-size="14" fill="#3c3c3c">Local Z</text><rect x="79.5" y="243.5" width="118" height="30" rx="4" fill="#fff" stroke="#e0642e"/><rect x="84.5" y="250.5" width="66" height="16.5" fill="#f07846"/><text x="85" y="264.5" font-size="14.5" fill="#fff">13,00 mm</text><rect x="149.5" y="250" width="1.2" height="17" fill="#222"/><rect x="79.5" y="282.5" width="118" height="30" rx="4" fill="#fff" stroke="#bcb9b4"/><text x="82.5" y="302.5" font-size="14.5" fill="#3c3c3c">-10,00 mm</text><rect x="79.5" y="321.5" width="118" height="30" rx="4" fill="#fff" stroke="#bcb9b4"/><text x="82.5" y="341.5" font-size="14.5" fill="#3c3c3c">-0,00 mm</text><circle cx="184.5" cy="258.3" r="6.4" fill="url(#chkg)"/><path d="M181 258.1 l2.6 3 l4.6-6" fill="none" stroke="#fff" stroke-width="1.9"/><circle cx="184.5" cy="297.5" r="6.4" fill="url(#chkg)"/><path d="M181 297.3 l2.6 3 l4.6-6" fill="none" stroke="#fff" stroke-width="1.9"/><circle cx="184.5" cy="336.7" r="6.4" fill="url(#chkg)"/><path d="M181 336.5 l2.6 3 l4.6-6" fill="none" stroke="#fff" stroke-width="1.9"/><rect x="27.5" y="358.5" width="13" height="13.5" rx="2" fill="#fff" stroke="#a6a39e"/><text x="49.3" y="370.3" font-size="14.8" fill="#3c3c3c">Continue</text><rect x="75" y="372" width="5" height="1" fill="#3c3c3c"/><rect x="27.5" y="386.5" width="13" height="13.5" rx="2" fill="#fff" stroke="#a6a39e"/><text x="49.3" y="398.3" font-size="14.8" fill="#3c3c3c">Copy</text><rect x="49.5" y="400" width="9.5" height="1" fill="#3c3c3c"/><rect x="224" y="551" width="4" height="1" fill="#b5b2ad"/><rect x="224" y="552" width="4" height="1" fill="#fcfcfb"/><rect x="224" y="554" width="4" height="1" fill="#b5b2ad"/><rect x="224" y="555" width="4" height="1" fill="#fcfcfb"/><rect x="224" y="557" width="4" height="1" fill="#b5b2ad"/><rect x="224" y="558" width="4" height="1" fill="#fcfcfb"/></svg>
<svg class="a" style="left:229px;top:81px" width="1596" height="913" viewBox="229 81 1596 913">
<defs>
<linearGradient id="bg" x1="0" y1="0" x2="0" y2="1"><stop offset="0" stop-color="#333366"/><stop offset="1" stop-color="#9999aa"/></linearGradient>
<linearGradient id="cone" gradientUnits="userSpaceOnUse" x1="605" y1="216" x2="633" y2="252.5"><stop offset="0" stop-color="#f0a810"/><stop offset="0.35" stop-color="#ffb412"/><stop offset="0.7" stop-color="#f8ac10"/><stop offset="0.88" stop-color="#d08a0c"/><stop offset="1" stop-color="#7a4e06"/></linearGradient><linearGradient id="cone2" gradientUnits="userSpaceOnUse" x1="626.6" y1="219.6" x2="630" y2="210"><stop offset="0" stop-color="#e8a41c"/><stop offset="1" stop-color="#80540e"/></linearGradient>
<linearGradient id="cyl" x1="0" y1="0" x2="1" y2="0.12"><stop offset="0" stop-color="#8a8a00"/><stop offset="0.14" stop-color="#d4d400"/><stop offset="0.5" stop-color="#f0f010"/><stop offset="0.82" stop-color="#d6d600"/><stop offset="1" stop-color="#5a5a00"/></linearGradient>
</defs>
<rect x="229" y="81" width="1596" height="913" fill="url(#bg)"/>
<!-- grid bg -->
<path d="M253.8 120.5L508.3 1211.0M252.0 135.9L691.3 -319.6M258.2 115.9L512.7 1206.5M254.5 146.8L693.8 -308.7M262.6 111.4L517.1 1201.9M257.1 157.7L696.4 -297.8M267.0 106.8L521.5 1197.3M259.6 168.6L698.9 -287.0M271.4 102.2L525.9 1192.7M262.1 179.5L701.5 -276.1M275.8 97.7L530.3 1188.2M264.7 190.4L704.0 -265.2M280.2 93.1L534.7 1183.6M267.2 201.3L706.6 -254.3M284.6 88.6L539.1 1179.0M269.8 212.1L709.1 -243.5M289.0 84.0L543.5 1174.4M272.3 223.0L711.7 -232.6M297.8 74.9L552.3 1165.3M277.4 244.8L716.7 -210.9M302.2 70.3L556.7 1160.7M279.9 255.7L719.3 -200.0M306.6 65.8L561.1 1156.1M282.5 266.6L721.8 -189.1M311.0 61.2L565.5 1151.6M285.0 277.5L724.4 -178.2M315.4 56.7L569.9 1147.0M287.6 288.4L726.9 -167.4M319.8 52.1L574.3 1142.4M290.1 299.3L729.5 -156.5M324.2 47.5L578.7 1137.8M292.6 310.2L732.0 -145.6M328.6 43.0L583.1 1133.3M295.2 321.1L734.6 -134.7M333.0 38.4L587.5 1128.7M297.7 332.0L737.1 -123.8M341.8 29.3L596.4 1119.5M302.8 353.7L742.2 -102.1M346.2 24.8L600.8 1115.0M305.4 364.6L744.8 -91.2M350.5 20.2L605.2 1110.4M307.9 375.5L747.3 -80.3M354.9 15.6L609.6 1105.8M310.4 386.4L749.9 -69.5M359.3 11.1L614.0 1101.2M313.0 397.3L752.4 -58.6M363.7 6.5L618.4 1096.7M315.5 408.2L755.0 -47.7M368.1 2.0L622.8 1092.1M318.1 419.1L757.5 -36.8M372.5 -2.6L627.2 1087.5M320.6 430.0L760.1 -25.9M376.9 -7.1L631.6 1083.0M323.2 440.9L762.6 -15.1M385.7 -16.2L640.4 1073.8M328.2 462.7L767.7 6.7M390.1 -20.8L644.8 1069.2M330.8 473.6L770.2 17.6M394.5 -25.4L649.2 1064.7M333.3 484.5L772.8 28.5M398.9 -29.9L653.6 1060.1M335.9 495.4L775.3 39.3M403.3 -34.5L658.0 1055.5M338.4 506.3L777.9 50.2M407.7 -39.0L662.4 1050.9M341.0 517.2L780.4 61.1M412.1 -43.6L666.8 1046.4M343.5 528.1L783.0 72.0M416.5 -48.1L671.1 1041.8M346.0 539.0L785.5 82.9M420.9 -52.7L675.5 1037.2M348.6 549.9L788.1 93.8M429.6 -61.8L684.3 1028.1M353.7 571.7L793.2 115.5M434.0 -66.4L688.7 1023.5M356.2 582.6L795.7 126.4M438.4 -70.9L693.1 1018.9M358.8 593.5L798.3 137.3M442.8 -75.5L697.5 1014.4M361.3 604.4L800.8 148.2M447.2 -80.0L701.9 1009.8M363.8 615.3L803.4 159.1M451.6 -84.6L706.3 1005.2M366.4 626.2L805.9 170.0M456.0 -89.1L710.7 1000.6M368.9 637.1L808.5 180.9M460.4 -93.7L715.1 996.1M371.5 648.0L811.0 191.7M464.8 -98.2L719.5 991.5M374.0 658.9L813.6 202.6M473.6 -107.4L728.3 982.3M379.1 680.8L818.7 224.4M478.0 -111.9L732.7 977.8M381.7 691.7L821.2 235.3M482.4 -116.5L737.1 973.2M384.2 702.6L823.8 246.2M486.8 -121.0L741.5 968.6M386.8 713.5L826.3 257.1M491.1 -125.6L745.9 964.1M389.3 724.4L828.9 268.0M495.5 -130.1L750.3 959.5M391.8 735.3L831.4 278.9M499.9 -134.7L754.7 954.9M394.4 746.2L834.0 289.7M504.3 -139.2L759.1 950.3M396.9 757.1L836.5 300.6M508.7 -143.8L763.5 945.8M399.5 768.0L839.1 311.5M517.5 -152.9L772.3 936.6M404.6 789.8L844.2 333.3M521.9 -157.5L776.7 932.1M407.1 800.8L846.7 344.2M526.3 -162.0L781.1 927.5M409.7 811.7L849.3 355.1M530.7 -166.6L785.5 922.9M412.2 822.6L851.8 366.0M535.1 -171.1L789.9 918.3M414.8 833.5L854.4 376.9M539.5 -175.7L794.3 913.8M417.3 844.4L857.0 387.8M543.9 -180.2L798.7 909.2M419.8 855.3L859.5 398.7M548.2 -184.8L803.1 904.6M422.4 866.2L862.1 409.6M552.6 -189.3L807.5 900.1M424.9 877.1L864.6 420.5M561.4 -198.4L816.3 890.9M430.0 899.0L869.7 442.3M565.8 -203.0L820.7 886.4M432.6 909.9L872.3 453.2M570.2 -207.5L825.1 881.8M435.1 920.8L874.8 464.1M574.6 -212.1L829.5 877.2M437.7 931.7L877.4 474.9M579.0 -216.6L833.9 872.6M440.2 942.6L879.9 485.8M583.4 -221.2L838.3 868.1M442.8 953.5L882.5 496.7M587.8 -225.8L842.7 863.5M445.3 964.5L885.0 507.6M592.2 -230.3L847.1 858.9M447.9 975.4L887.6 518.5M596.5 -234.9L851.5 854.4M450.4 986.3L890.1 529.4M605.3 -244.0L860.2 845.2M455.5 1008.1L895.2 551.2M609.7 -248.5L864.6 840.7M458.1 1019.0L897.8 562.1M614.1 -253.1L869.0 836.1M460.6 1030.0L900.3 573.0M618.5 -257.6L873.4 831.5M463.1 1040.9L902.9 583.9M622.9 -262.2L877.8 826.9M465.7 1051.8L905.4 594.8M627.3 -266.7L882.2 822.4M468.2 1062.7L908.0 605.7M631.7 -271.3L886.6 817.8M470.8 1073.6L910.6 616.7M636.1 -275.8L891.0 813.2M473.3 1084.6L913.1 627.6M640.4 -280.4L895.4 808.7M475.9 1095.5L915.7 638.5M649.2 -289.5L904.2 799.5M481.0 1117.3L920.8 660.3M653.6 -294.0L908.6 795.0M483.5 1128.2L923.3 671.2M658.0 -298.6L913.0 790.4M486.1 1139.2L925.9 682.1M662.4 -303.1L917.4 785.8M488.6 1150.1L928.4 693.0M666.8 -307.7L921.8 781.3M491.2 1161.0L931.0 703.9M671.2 -312.2L926.2 776.7M493.7 1171.9L933.5 714.8M675.6 -316.8L930.6 772.1M496.3 1182.8L936.1 725.7M680.0 -321.3L935.0 767.6M498.8 1193.8L938.6 736.6M684.3 -325.9L939.4 763.0M501.4 1204.7L941.2 747.5" stroke="#303050" stroke-opacity="0.21" stroke-width="1" fill="none"/>
<path d="M249.4 125.0L503.9 1215.6M249.4 125.0L688.7 -330.4M293.4 79.5L547.9 1169.9M274.9 233.9L714.2 -221.7M337.4 33.9L592.0 1124.1M300.3 342.8L739.7 -113.0M381.3 -11.7L636.0 1078.4M325.7 451.8L765.1 -4.2M425.2 -57.3L679.9 1032.6M351.1 560.8L790.6 104.6M469.2 -102.8L723.9 986.9M376.6 669.9L816.1 213.5M513.1 -148.3L767.9 941.2M402.0 778.9L841.6 322.4M557.0 -193.9L811.9 895.5M427.5 888.0L867.2 431.4M600.9 -239.4L855.9 849.8M453.0 997.2L892.7 540.3M644.8 -284.9L899.8 804.1M478.4 1106.4L918.2 649.4M688.7 -330.4L943.8 758.4M503.9 1215.6L943.8 758.4" stroke="#303050" stroke-opacity="0.62" stroke-width="1" fill="none"/>
<!-- yellow plane -->
<clipPath id="ypc"><path d="M426.8 299.5 L640.8 78 L647.7 78 L765.8 584.4 L546.4 811.7 Z"/></clipPath>
<path d="M426.8 299.5 L640.8 78 L647.7 78 L765.8 584.4 L546.4 811.7 Z" fill="#7a7a06"/>
<g clip-path="url(#ypc)">
<path d="M253.8 120.5L508.3 1211.0M252.0 135.9L691.3 -319.6M258.2 115.9L512.7 1206.5M254.5 146.8L693.8 -308.7M262.6 111.4L517.1 1201.9M257.1 157.7L696.4 -297.8M267.0 106.8L521.5 1197.3M259.6 168.6L698.9 -287.0M271.4 102.2L525.9 1192.7M262.1 179.5L701.5 -276.1M275.8 97.7L530.3 1188.2M264.7 190.4L704.0 -265.2M280.2 93.1L534.7 1183.6M267.2 201.3L706.6 -254.3M284.6 88.6L539.1 1179.0M269.8 212.1L709.1 -243.5M289.0 84.0L543.5 1174.4M272.3 223.0L711.7 -232.6M297.8 74.9L552.3 1165.3M277.4 244.8L716.7 -210.9M302.2 70.3L556.7 1160.7M279.9 255.7L719.3 -200.0M306.6 65.8L561.1 1156.1M282.5 266.6L721.8 -189.1M311.0 61.2L565.5 1151.6M285.0 277.5L724.4 -178.2M315.4 56.7L569.9 1147.0M287.6 288.4L726.9 -167.4M319.8 52.1L574.3 1142.4M290.1 299.3L729.5 -156.5M324.2 47.5L578.7 1137.8M292.6 310.2L732.0 -145.6M328.6 43.0L583.1 1133.3M295.2 321.1L734.6 -134.7M333.0 38.4L587.5 1128.7M297.7 332.0L737.1 -123.8M341.8 29.3L596.4 1119.5M302.8 353.7L742.2 -102.1M346.2 24.8L600.8 1115.0M305.4 364.6L744.8 -91.2M350.5 20.2L605.2 1110.4M307.9 375.5L747.3 -80.3M354.9 15.6L609.6 1105.8M310.4 386.4L749.9 -69.5M359.3 11.1L614.0 1101.2M313.0 397.3L752.4 -58.6M363.7 6.5L618.4 1096.7M315.5 408.2L755.0 -47.7M368.1 2.0L622.8 1092.1M318.1 419.1L757.5 -36.8M372.5 -2.6L627.2 1087.5M320.6 430.0L760.1 -25.9M376.9 -7.1L631.6 1083.0M323.2 440.9L762.6 -15.1M385.7 -16.2L640.4 1073.8M328.2 462.7L767.7 6.7M390.1 -20.8L644.8 1069.2M330.8 473.6L770.2 17.6M394.5 -25.4L649.2 1064.7M333.3 484.5L772.8 28.5M398.9 -29.9L653.6 1060.1M335.9 495.4L775.3 39.3M403.3 -34.5L658.0 1055.5M338.4 506.3L777.9 50.2M407.7 -39.0L662.4 1050.9M341.0 517.2L780.4 61.1M412.1 -43.6L666.8 1046.4M343.5 528.1L783.0 72.0M416.5 -48.1L671.1 1041.8M346.0 539.0L785.5 82.9M420.9 -52.7L675.5 1037.2M348.6 549.9L788.1 93.8M429.6 -61.8L684.3 1028.1M353.7 571.7L793.2 115.5M434.0 -66.4L688.7 1023.5M356.2 582.6L795.7 126.4M438.4 -70.9L693.1 1018.9M358.8 593.5L798.3 137.3M442.8 -75.5L697.5 1014.4M361.3 604.4L800.8 148.2M447.2 -80.0L701.9 1009.8M363.8 615.3L803.4 159.1M451.6 -84.6L706.3 1005.2M366.4 626.2L805.9 170.0M456.0 -89.1L710.7 1000.6M368.9 637.1L808.5 180.9M460.4 -93.7L715.1 996.1M371.5 648.0L811.0 191.7M464.8 -98.2L719.5 991.5M374.0 658.9L813.6 202.6M473.6 -107.4L728.3 982.3M379.1 680.8L818.7 224.4M478.0 -111.9L732.7 977.8M381.7 691.7L821.2 235.3M482.4 -116.5L737.1 973.2M384.2 702.6L823.8 246.2M486.8 -121.0L741.5 968.6M386.8 713.5L826.3 257.1M491.1 -125.6L745.9 964.1M389.3 724.4L828.9 268.0M495.5 -130.1L750.3 959.5M391.8 735.3L831.4 278.9M499.9 -134.7L754.7 954.9M394.4 746.2L834.0 289.7M504.3 -139.2L759.1 950.3M396.9 757.1L836.5 300.6M508.7 -143.8L763.5 945.8M399.5 768.0L839.1 311.5M517.5 -152.9L772.3 936.6M404.6 789.8L844.2 333.3M521.9 -157.5L776.7 932.1M407.1 800.8L846.7 344.2M526.3 -162.0L781.1 927.5M409.7 811.7L849.3 355.1M530.7 -166.6L785.5 922.9M412.2 822.6L851.8 366.0M535.1 -171.1L789.9 918.3M414.8 833.5L854.4 376.9M539.5 -175.7L794.3 913.8M417.3 844.4L857.0 387.8M543.9 -180.2L798.7 909.2M419.8 855.3L859.5 398.7M548.2 -184.8L803.1 904.6M422.4 866.2L862.1 409.6M552.6 -189.3L807.5 900.1M424.9 877.1L864.6 420.5M561.4 -198.4L816.3 890.9M430.0 899.0L869.7 442.3M565.8 -203.0L820.7 886.4M432.6 909.9L872.3 453.2M570.2 -207.5L825.1 881.8M435.1 920.8L874.8 464.1M574.6 -212.1L829.5 877.2M437.7 931.7L877.4 474.9M579.0 -216.6L833.9 872.6M440.2 942.6L879.9 485.8M583.4 -221.2L838.3 868.1M442.8 953.5L882.5 496.7M587.8 -225.8L842.7 863.5M445.3 964.5L885.0 507.6M592.2 -230.3L847.1 858.9M447.9 975.4L887.6 518.5M596.5 -234.9L851.5 854.4M450.4 986.3L890.1 529.4M605.3 -244.0L860.2 845.2M455.5 1008.1L895.2 551.2M609.7 -248.5L864.6 840.7M458.1 1019.0L897.8 562.1M614.1 -253.1L869.0 836.1M460.6 1030.0L900.3 573.0M618.5 -257.6L873.4 831.5M463.1 1040.9L902.9 583.9M622.9 -262.2L877.8 826.9M465.7 1051.8L905.4 594.8M627.3 -266.7L882.2 822.4M468.2 1062.7L908.0 605.7M631.7 -271.3L886.6 817.8M470.8 1073.6L910.6 616.7M636.1 -275.8L891.0 813.2M473.3 1084.6L913.1 627.6M640.4 -280.4L895.4 808.7M475.9 1095.5L915.7 638.5M649.2 -289.5L904.2 799.5M481.0 1117.3L920.8 660.3M653.6 -294.0L908.6 795.0M483.5 1128.2L923.3 671.2M658.0 -298.6L913.0 790.4M486.1 1139.2L925.9 682.1M662.4 -303.1L917.4 785.8M488.6 1150.1L928.4 693.0M666.8 -307.7L921.8 781.3M491.2 1161.0L931.0 703.9M671.2 -312.2L926.2 776.7M493.7 1171.9L933.5 714.8M675.6 -316.8L930.6 772.1M496.3 1182.8L936.1 725.7M680.0 -321.3L935.0 767.6M498.8 1193.8L938.6 736.6M684.3 -325.9L939.4 763.0M501.4 1204.7L941.2 747.5" stroke="#3a3a58" stroke-opacity="0.27" stroke-width="1" fill="none"/>
<path d="M249.4 125.0L503.9 1215.6M249.4 125.0L688.7 -330.4M293.4 79.5L547.9 1169.9M274.9 233.9L714.2 -221.7M337.4 33.9L592.0 1124.1M300.3 342.8L739.7 -113.0M381.3 -11.7L636.0 1078.4M325.7 451.8L765.1 -4.2M425.2 -57.3L679.9 1032.6M351.1 560.8L790.6 104.6M469.2 -102.8L723.9 986.9M376.6 669.9L816.1 213.5M513.1 -148.3L767.9 941.2M402.0 778.9L841.6 322.4M557.0 -193.9L811.9 895.5M427.5 888.0L867.2 431.4M600.9 -239.4L855.9 849.8M453.0 997.2L892.7 540.3M644.8 -284.9L899.8 804.1M478.4 1106.4L918.2 649.4M688.7 -330.4L943.8 758.4M503.9 1215.6L943.8 758.4" stroke="#3c3c6c" stroke-opacity="0.62" stroke-width="1" fill="none"/>
</g>
<path d="M426.8 299.5 L640.8 78 L647.7 78 L765.8 584.4 L546.4 811.7 Z" fill="none" stroke="#000" stroke-width="1.8" stroke-linejoin="round"/>
<g stroke="#151515" stroke-width="1.8" stroke-linejoin="round">
<!-- cone -->
<path d="M658 231.8 C 640 220 615 205 605 200 C 592 197 588 215 589.8 231 C 591 250 598 268 607.3 270.6 C 612 272 640 245 658 231.8 Z" fill="url(#cone)" stroke-width="1.5"/>
<path d="M595.3 207.5 C598 201 601 199.5 605 200 C 615 205 640 220 658 231.8 Z" fill="url(#cone2)" stroke-width="1.4"/>
<!-- blue star -->
<path d="M548.2 299.4 L574.8 320.7 L600.3 319.7 L590.4 381.1 L559.2 382.7 L553 378.5 L545.6 390 L522.7 350.4 L541.5 337.4 L544.1 337.4 Z" fill="#0a0a88"/>
<path d="M574.8 320.7 L600.3 319.7 L580 326.5 Z" fill="#0a0a40" stroke-width="1"/>
<path d="M565.4 356.1 L590.4 381.1 L559.2 382.7 L553 378.5 Z" fill="#0c0c78"/>
<path d="M516.5 300.9 L548.2 299.4 L544.1 337.4 L512.8 338.4 Z" fill="#0a0ae8"/>
<path d="M490.9 352.5 L512.8 339 L541.5 337.4 L522.7 350.4 Z" fill="#2cb858"/>
<path d="M490.9 352.5 L522.7 350.4 L545.1 390 L512.3 391 Z" fill="#0c0cc4"/>
</g>
<path d="M522.7 350.4 L545.6 390" stroke="#e8e020" stroke-width="2"/>
<circle cx="513.3" cy="392.6" r="4.5" fill="#fff"/>
<path d="M542 373.2v13.6M535.2 380.2h13.6" stroke="#000" stroke-width="3.6" stroke-linecap="square"/><path d="M542 373.6v12.8M535.6 380.2h12.8" stroke="#fff" stroke-width="2.2"/>
<path d="M554.5 391.2 L563.5 383.5" stroke="#08483e" stroke-width="3.6" stroke-linecap="round"/><circle cx="554.3" cy="391.5" r="3" fill="#20c0a0" stroke="#08483e" stroke-width="0.9"/><path d="M554.5 391.2 L563.5 383.5" stroke="#20c0a0" stroke-width="1.8" stroke-linecap="round"/>
<g stroke="#151515" stroke-width="1.8" stroke-linejoin="round">
<!-- pink box -->
<path d="M627.2 314.8 L666.7 273.7 L698.1 272.1 L659.5 312.3 Z" fill="#5e4262"/>
<path d="M627.2 314.8 L659.5 312.3 L683.6 421 L652.2 423.4 Z" fill="#e49ae0"/>
<path d="M659.5 312.3 L698.1 272.1 L723.1 380 L683.6 421 Z" fill="#78547c"/>
<path d="M673.1 312.3 L685.2 298.6 L717.4 297 L704.5 310.7 Z" fill="#3e3e5e"/>
<path d="M673.1 312.3 L704.5 310.7 L711.8 342.9 L679.6 344.5 Z" fill="#9c9ce2"/>
<path d="M704.5 310.7 L717.4 297 L724.7 329.2 L711.8 342.9 Z" fill="#52527c"/>
<!-- blue cube -->
<path d="M904 484 L950 438 L1056.5 469.7 L1011.8 514.4 Z" fill="#0a5580"/>
<path d="M904 484 L1011.8 514.4 L1001 620.1 L890.9 589.6 Z" fill="#0c9be2"/>
<path d="M1011.8 514.4 L1056.5 469.7 L1044.5 574.3 L1001 620.1 Z" fill="#0a3a58"/>
<!-- green cube -->
<path d="M922.5 428.3 L939.9 410.9 L982.4 422.9 L965 440.3 Z" fill="#0c7a10"/>
<path d="M922.5 428.3 L965 440.3 L960.6 482.4 L917 470.8 Z" fill="#10e010"/>
<path d="M965 440.3 L982.4 422.9 L978.1 465.4 L960.6 482.4 Z" fill="#0a5a0a"/>
<!-- red wedge -->
<path d="M1061.5 642.1 L1105.5 596.7 L1246.4 547.5 Z" fill="#300a0a"/>
<path d="M1246.4 548 L1216 628.5 L1170.6 672.4 Z" fill="#200808"/>
<path d="M1061.5 642.1 L1246.4 548 L1170.6 672.4 Z" fill="#ff0a0a"/>
</g>
<path d="M589.6 506 L904 484" stroke="#111" stroke-width="2"/>
<path d="M1246 548 L1232 668" stroke="#111" stroke-width="2"/>
<!-- arc dim -->
<path d="M656.8 501.3 L661.4 508.4 L665.6 515.7 L669.3 523.2 L672.6 530.7 L675.3 538.4 L677.6 546.1 L679.3 553.8 L680.6 561.5 L681.3 569.2 L681.5 576.9 L681.2 584.5 L680.3 591.9 L679.0 599.2 L677.1 606.3 L674.7 613.3 L671.8 620.0 L668.5 626.4 L664.7 632.6 L660.4 638.5 L655.6 644.1 L650.5 649.3 L644.9 654.2 L638.9 658.7 L632.6 662.8 L626.0 666.5 L619.0 669.8 L611.8 672.6 L604.3 675.0 L596.5 676.9 L588.6 678.4 L580.5 679.4 L572.2 679.9 L563.8 679.9 L555.4 679.5 L546.9 678.6 L538.4 677.2 L529.9 675.4 L521.5 673.1 L513.1 670.3" stroke="#1c1cf8" stroke-width="1.05" fill="none"/>
<path d="M656.8 501.3 L661.9 505.2 L658.0 507.6 ZM513.1 670.3 L519.5 669.8 L518.2 674.2 Z" fill="#1c1cf8"/>
<path d="M624.5 632.5 H629.5 C633 632.5 635.8 629.5 635.8 624 V619 M635.8 619.5 C635.8 615.5 633.5 613.3 630 613.3 C626.5 613.3 624.3 615.8 624.3 619 C624.3 622.5 626.5 624.6 629.5 624.6 C632.5 624.6 635 622.8 635.8 619.5" stroke="#1414f0" stroke-width="1.1" fill="none"/>
<ellipse cx="648.5" cy="622.9" rx="6.2" ry="9.8" stroke="#1414f0" stroke-width="1.1" fill="none"/>
<ellipse cx="686.5" cy="614.5" rx="4.1" ry="4.2" fill="none" stroke="#1414f0" stroke-width="1.3"/>
<!-- cylinder -->
<path d="M1318.3 770.3 L1305.5 874.1 C 1306 882 1320 889 1331.2 887 C 1342 886 1352 884 1352.4 878.6 L1365.3 774 Z" fill="url(#cyl)" stroke="#111" stroke-width="1.6"/>
<ellipse cx="1341.8" cy="771.8" rx="23.6" ry="11.3" transform="rotate(7 1341.8 771.8)" fill="#7f7f08" stroke="#111" stroke-width="1.6"/>
<!-- axis -->
<path d="M1779.5 948 L1782.5 926" stroke="#22228c" stroke-width="1.6"/><path d="M1783.2 916.5 L1778.5 927.5 L1786 928.5 Z" fill="#22228c"/>
<path d="M1779.5 948 L1785 942" stroke="#1a8a1a" stroke-width="1.6"/><path d="M1789.2 938.5 L1783.5 941 L1786.8 944.5 Z" fill="#1a8a1a"/>
<path d="M1779.5 948 L1801 954.5" stroke="#8a1c1c" stroke-width="1.6"/><path d="M1811 957.5 L1800.5 951 L1799 958 Z" fill="#8a1c1c"/>
<text x="1785.5" y="917" font-family="Liberation Sans" font-size="10.5" fill="#000">Z</text>
<text x="1790.5" y="939" font-family="Liberation Sans" font-size="10.5" fill="#000">Y</text>
<text x="1813.5" y="958.5" font-family="Liberation Sans" font-size="10.5" fill="#000">X</text>
</svg>
<svg class="a" style="left:1825px;top:81px" width="30" height="380" viewBox="1825 81 30 380"><defs><linearGradient id="rbg" x1="0" y1="0" x2="0" y2="1"><stop offset="0" stop-color="#fbfbfa"/><stop offset="1" stop-color="#e6e5e3"/></linearGradient></defs><rect x="1836" y="85" width="1" height="4" fill="#c0bdb8"/><rect x="1839" y="85" width="1" height="4" fill="#c0bdb8"/><rect x="1842" y="85" width="1" height="4" fill="#c0bdb8"/><rect x="1828.5" y="93.5" width="23" height="23" rx="3.5" fill="url(#rbg)" stroke="#b6b3ae"/><g transform="translate(1840 105.0)"><path d="M-3.3 -0.5 v-2.5 a3.3 3.3 0 0 1 6.6 0 v2.5" fill="none" stroke="#0b4a3e" stroke-width="2.6"/><path d="M-3.3 -0.5 v-2.5 a3.3 3.3 0 0 1 6.6 0 v2.5" fill="none" stroke="#12a888" stroke-width="1.2"/><rect x="-5" y="-0.5" width="10" height="7" rx="0.8" fill="#12a888" stroke="#0b4a3e" stroke-width="0.8"/><path d="M-4 2h8M-4 4h8" stroke="#3ac8a8" stroke-width="0.6"/></g><rect x="1828.5" y="119.5" width="23" height="23" rx="3.5" fill="url(#rbg)" stroke="#b6b3ae"/><g transform="translate(1840 131.0)"><path d="M-6.5 6 L6.5 -6" stroke="#0b4a3e" stroke-width="4.4" stroke-linecap="round"/><path d="M-6.5 6 L6.5 -6" stroke="#12a888" stroke-width="2.6" stroke-linecap="round"/><ellipse rx="3.6" ry="2.8" transform="rotate(-42)" fill="#12a888" stroke="#0b4a3e" stroke-width="0.9"/></g><rect x="1828.5" y="145.5" width="23" height="23" rx="3.5" fill="#fefefe" stroke="#b6b3ae"/><g transform="translate(1840 157.0)"><path d="M-7 6 H7 M0 6 V-7" stroke="#0b4a3e" stroke-width="3.4"/><path d="M-6.5 6 H6.5 M0 5.5 V-6.5" stroke="#12a888" stroke-width="1.8"/></g><rect x="1828.5" y="171.5" width="23" height="23" rx="3.5" fill="url(#rbg)" stroke="#b6b3ae"/><g transform="translate(1840 183.0)"><path d="M-4 -6 v3 h-2 v2 h2 v2 h-2 v2 h2 v3 h2 v-2 h4 v2 h2 v-3 h2 v-2 h-2 v-2 h2 v-2 h-2 v-3 h-2 v2 h-4 v-2z M-2 -2 v4 h4 v-4z" fill="#12a888" stroke="#0b4a3e" stroke-width="0.8" transform="scale(1.1)"/></g><rect x="1828.5" y="197.5" width="23" height="23" rx="3.5" fill="url(#rbg)" stroke="#b6b3ae"/><g transform="translate(1840 209.0)"><path d="M-6 -6 L6 6 M6 -6 L-6 6" stroke="#0b4a3e" stroke-width="3.8"/><path d="M-6 -6 L6 6 M6 -6 L-6 6" stroke="#12a888" stroke-width="2.2"/></g><rect x="1828.5" y="223.5" width="23" height="23" rx="3.5" fill="url(#rbg)" stroke="#b6b3ae"/><g transform="translate(1840 235.0)"><path d="M-7 1 L5 -6 M-5 6 L7 -1" stroke="#0b4a3e" stroke-width="3.2"/><path d="M-7 1 L5 -6 M-5 6 L7 -1" stroke="#12a888" stroke-width="1.8"/></g><rect x="1828.5" y="249.5" width="23" height="23" rx="3.5" fill="url(#rbg)" stroke="#b6b3ae"/><g transform="translate(1840 261.0)"><path d="M-4 4 L7 -6" stroke="#0b4a3e" stroke-width="3"/><path d="M-4 4 L7 -6" stroke="#12a888" stroke-width="1.6"/><circle cx="-5" cy="5" r="2.6" fill="#12a888" stroke="#0b4a3e" stroke-width="0.8"/></g><rect x="1828.5" y="275.5" width="23" height="23" rx="3.5" fill="url(#rbg)" stroke="#b6b3ae"/><g transform="translate(1840 287.0)"><circle r="4.5" fill="none" stroke="#0b4a3e" stroke-width="2.8"/><circle r="4.5" fill="none" stroke="#12a888" stroke-width="1.4"/><circle cx="0" cy="-5.5" r="2" fill="#12a888"/><circle cx="0" cy="5.5" r="2" fill="#12a888"/><circle cx="-5.5" cy="0" r="2" fill="#12a888"/><circle cx="5.5" cy="0" r="2" fill="#12a888"/></g><rect x="1828.5" y="301.5" width="23" height="23" rx="3.5" fill="url(#rbg)" stroke="#b6b3ae"/><g transform="translate(1840 313.0)"><circle r="6" fill="none" stroke="#0b4a3e" stroke-width="2.8"/><circle r="6" fill="none" stroke="#12a888" stroke-width="1.5"/><circle r="2.5" fill="#12a888" stroke="#0b4a3e" stroke-width="0.9"/></g><rect x="1828.5" y="327.5" width="23" height="23" rx="3.5" fill="url(#rbg)" stroke="#b6b3ae"/><g transform="translate(1840 339.0)"><circle cx="-5" r="2.1" fill="#12a888" stroke="#0b4a3e" stroke-width="0.7"/><circle cx="0" r="2.1" fill="#12a888" stroke="#0b4a3e" stroke-width="0.7"/><circle cx="5" r="2.1" fill="#12a888" stroke="#0b4a3e" stroke-width="0.7"/></g><rect x="1828.5" y="353.5" width="23" height="23" rx="3.5" fill="url(#rbg)" stroke="#b6b3ae"/><g transform="translate(1840 365.0)"><path d="M-6 -1.5 L4 5" stroke="#0b4a3e" stroke-width="3.6" stroke-linecap="round"/><path d="M-6 -1.5 L4 5" stroke="#12a888" stroke-width="2" stroke-linecap="round"/><circle cx="3" cy="-4" r="2.2" fill="#12a888" stroke="#0b4a3e" stroke-width="0.7"/></g><rect x="1828.5" y="379.5" width="23" height="23" rx="3.5" fill="url(#rbg)" stroke="#b6b3ae"/><g transform="translate(1840 391.0)"><path d="M-6 0 H6 M0 -6 V6" stroke="#0b4a3e" stroke-width="3.8"/><path d="M-6 0 H6 M0 -6 V6" stroke="#12a888" stroke-width="2.2"/></g><rect x="1828.5" y="405.5" width="23" height="23" rx="3.5" fill="url(#rbg)" stroke="#b6b3ae"/><g transform="translate(1840 417.0)"><path d="M-4.5 6.5 H-1.5 M-2.5 6.5 V-1 H6 V1.5 M-2.5 -1 V-2" fill="none" stroke="#0b4a3e" stroke-width="1.2"/><text x="-1" y="-2.5" font-size="4.6" font-weight="bold" fill="#12a888">1.00</text><text x="0" y="0" font-size="4.6" font-weight="bold" fill="#12a888" transform="translate(-4 5.5) rotate(-90)">1.00</text></g><rect x="1828.5" y="431.5" width="23" height="23" rx="3.5" fill="url(#rbg)" stroke="#b6b3ae"/><g transform="translate(1840 443.0)"><rect x="-6.5" y="-6.5" width="13" height="13" rx="1.5" fill="#12a888" stroke="#0b4a3e" stroke-width="0.9"/><circle cx="-2.5" cy="2.5" r="1.5" fill="none" stroke="#0b4a3e" stroke-width="0.9"/></g></svg>
<svg class="a" style="left:0;top:990px" width="1855" height="66" viewBox="0 990 1855 66" font-family="Liberation Sans"><defs><linearGradient id="tabb" x1="0" y1="0" x2="0" y2="1"><stop offset="0" stop-color="#f4f4f3"/><stop offset="1" stop-color="#fdfdfd"/></linearGradient></defs><rect x="0" y="1027" width="1855" height="1" fill="#d9d6d2"/><rect x="0" y="1028" width="1855" height="1" fill="#fbfbfa"/><path d="M229.5 994 V1023.5 a3 3 0 0 0 3 3 H440.5 a3 3 0 0 0 3-3 V994" fill="url(#tabb)" stroke="#b9b6b1"/><rect x="229.5" y="994" width="1" height="1" fill="#b9b6b1"/><path d="M236.8 1003 h7.5 v2.8 h-4.5 v2.6 h3.6 v2.6 h-3.6 v4.4 h-3z" fill="#f03a10"/><g transform="translate(245.7 1011) scale(0.9)"><path d="M0 -5.5 l1.3 2 2.4-.8 .1 2.4 2.3.8-1.4 2 1.4 2-2.3.8-.1 2.4-2.4-.8-1.3 2-1.3-2-2.4.8-.1-2.4-2.3-.8 1.4-2-1.4-2 2.3-.8.1-2.4 2.4.8z" fill="#1a3aa8"/><circle r="1.8" fill="#fff"/></g><text x="259.5" y="1016" font-size="14.6" fill="#3c3c3c">F2-T19-ejemplo-ini : 1*</text><path d="M421.5 1006.5 L430.5 1015.5 M430.5 1006.5 L421.5 1015.5" stroke="#5a5a5a" stroke-width="3.2"/><text x="1853" y="1048" font-size="14.3" fill="#3c3c3c" text-anchor="end">134.77 x 77.10 mm</text></svg>
</body></html>
